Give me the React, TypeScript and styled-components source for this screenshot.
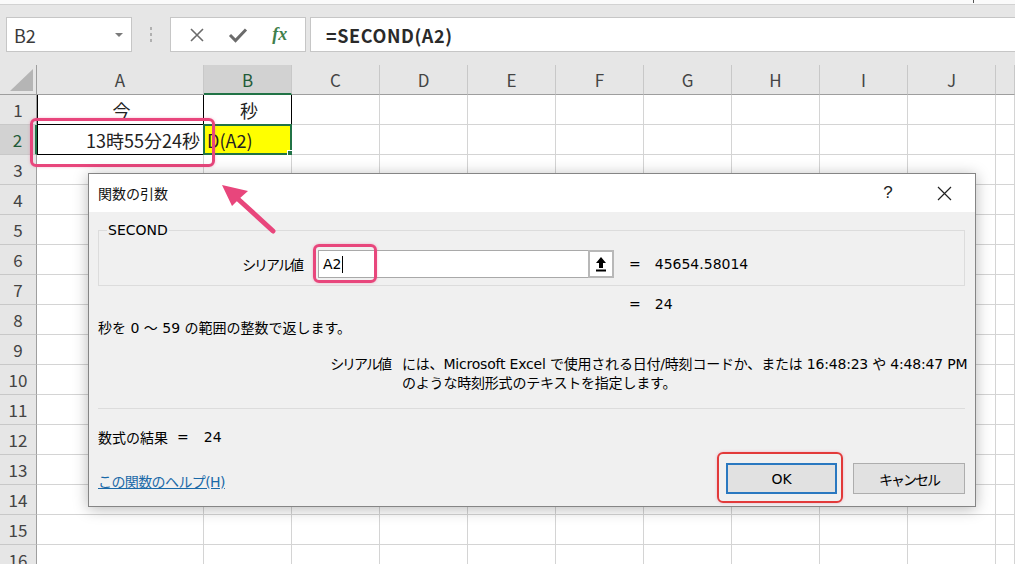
import React from 'react';
import styled, { createGlobalStyle } from 'styled-components';

const GlobalStyle = createGlobalStyle`
  html, body { margin: 0; padding: 0; background: #fff; }
  body { font-family: "Noto Sans CJK JP", "Noto Sans", sans-serif; overflow: hidden; }
  * { box-sizing: border-box; }
`;

const Page = styled.div`
  position: relative;
  width: 1015px;
  height: 564px;
  overflow: hidden;
  background: #fff;
`;

const TopStrip = styled.div`
  height: 5px;
  background: #fafafa;
  border-bottom: 1px solid #d2d2d2;
  display: flex;
  padding-left: 973px;
`;

const StripMark = styled.div`
  width: 1px;
  height: 3px;
  background: #555;
`;

const Toolbar = styled.div`
  display: flex;
  align-items: stretch;
  height: 60px;
  padding: 12px 0 13px 6px;
  background: #e6e6e6;
`;

const NameBox = styled.div`
  width: 126px;
  background: #fff;
  border: 1px solid #c6c6c6;
  display: flex;
  align-items: center;
  justify-content: space-between;
  padding: 0 8px 0 7px;
  font-size: 18px;
  color: #3a3a3a;
`;

const DropTri = styled.span`
  width: 0;
  height: 0;
  border-left: 4px solid transparent;
  border-right: 4px solid transparent;
  border-top: 4px solid #7a7a7a;
`;

const Grip = styled.div`
  width: 38px;
  display: flex;
  flex-direction: column;
  align-items: center;
  justify-content: center;
  gap: 3px;
`;

const GripDot = styled.span`
  width: 2px;
  height: 3px;
  background: #b0b0b0;
`;

const FxBox = styled.div`
  width: 136px;
  background: #fff;
  border: 1px solid #c6c6c6;
  display: flex;
  align-items: center;
  justify-content: space-around;
  padding: 0 6px;
`;

const FxText = styled.span`
  font-family: "Liberation Serif", serif;
  font-style: italic;
  font-weight: bold;
  font-size: 18px;
  color: #3f7f4c;
`;

const FormulaInput = styled.div`
  flex: 1;
  margin-left: 4px;
  margin-right: -2px;
  background: #fff;
  border: 1px solid #c6c6c6;
  display: flex;
  align-items: center;
  padding-left: 15px;
  font-size: 18px;
  font-weight: 600;
  color: #2a2a2a;
  letter-spacing: 0.6px;
`;

const Sheet = styled.div`
  display: grid;
  grid-template-columns: 37px 167px repeat(9, 88px) 1fr;
  grid-auto-rows: 30px;
  background: #fff;
`;

const Corner = styled.div`
  background: #e6e6e6;
  border-right: 1px solid #9e9e9e;
  border-bottom: 1px solid #9e9e9e;
  display: flex;
  align-items: flex-end;
  justify-content: flex-end;
  padding: 0 3px 3px 0;
`;

const CornerTri = styled.div`
  width: 0;
  height: 0;
  border-left: 23px solid transparent;
  border-bottom: 22px solid #b5b5b5;
`;

const ColHeader = styled.div<{ $selected?: boolean }>`
  background: ${p => (p.$selected ? '#d2d2d2' : '#e6e6e6')};
  border-right: 1px solid #c8c8c8;
  border-bottom: ${p => (p.$selected ? '2px solid #217346' : '1px solid #9e9e9e')};
  display: flex;
  align-items: center;
  justify-content: center;
  font-size: 17px;
  color: ${p => (p.$selected ? '#1f5b38' : '#444')};
  padding-top: ${p => (p.$selected ? '1px' : '0')};
`;

const RowHeader = styled.div<{ $selected?: boolean }>`
  background: ${p => (p.$selected ? '#d2d2d2' : '#e6e6e6')};
  border-right: ${p => (p.$selected ? '2px solid #217346' : '1px solid #9e9e9e')};
  border-bottom: 1px solid #c8c8c8;
  display: flex;
  align-items: center;
  justify-content: center;
  font-size: 17px;
  color: ${p => (p.$selected ? '#1f5b38' : '#444')};
`;

const Cell = styled.div<{
  $align?: 'left' | 'center' | 'right';
  $boxed?: boolean;
  $leftEdge?: boolean;
  $fill?: string;
  $active?: boolean;
}>`
  position: relative;
  background: ${p => p.$fill || '#fff'};
  border-right: 1px solid ${p => (p.$boxed ? '#000' : '#d4d4d4')};
  border-bottom: 1px solid ${p => (p.$boxed ? '#000' : '#d4d4d4')};
  box-shadow: ${p => (p.$leftEdge ? 'inset 1px 0 0 #000' : 'none')};
  display: flex;
  align-items: center;
  justify-content: ${p =>
    p.$align === 'right' ? 'flex-end' : p.$align === 'center' ? 'center' : 'flex-start'};
  padding: ${p => (p.$align === 'right' ? '0 3px 0 0' : '0 0 0 3px')};
  font-size: 18px;
  color: #222;
  white-space: nowrap;
  overflow: visible;

  ${p =>
    p.$active &&
    `
    &::before {
      content: '';
      position: absolute;
      left: -1px;
      top: -1px;
      right: -1px;
      bottom: -1px;
      border: 2px solid #217346;
    }
    &::after {
      content: '';
      position: absolute;
      right: -4px;
      bottom: -4px;
      width: 6px;
      height: 6px;
      background: #217346;
      border: 1px solid #fff;
    }
  `}
`;

const Highlight = styled.div<{ $color: string; $w: number }>`
  position: absolute;
  border: ${p => p.$w}px solid ${p => p.$color};
  border-radius: 6px;
  box-shadow: 0 0 3px rgba(232, 70, 124, 0.35);
  pointer-events: none;
`;

const ArrowSvg = styled.svg`
  position: absolute;
  left: 0;
  top: 0;
  pointer-events: none;
`;

const Dialog = styled.div`
  position: absolute;
  left: 88px;
  top: 173px;
  width: 888px;
  height: 334px;
  border: 1px solid #858585;
  box-shadow: 0 2px 14px rgba(0, 0, 0, 0.28);
  display: flex;
  flex-direction: column;
  font-family: "DejaVu Sans", "Noto Sans CJK JP", sans-serif;
  font-size: 14px;
  color: #000;
`;

const Kana = styled.span`
  letter-spacing: -2px;
`;

const TitleBar = styled.div`
  height: 38px;
  background: #fff;
  display: flex;
  align-items: center;
  padding: 0 8px 0 9px;
`;

const Title = styled.div`
  flex: 1;
  font-size: 14px;
  color: #111;
`;

const TitleButton = styled.div`
  width: 46px;
  height: 38px;
  display: flex;
  align-items: center;
  justify-content: center;
  font-family: "Liberation Sans", sans-serif;
  font-size: 17px;
  color: #222;
  margin-left: 10px;
`;

const Body = styled.div`
  flex: 1;
  background: #f0f0f0;
  padding: 18px 10px 11px 9px;
  display: flex;
  flex-direction: column;
`;

const GroupBox = styled.div`
  position: relative;
  height: 56px;
  border: 1px solid #dcdcdc;
  padding-top: 19px;
`;

const GroupLabel = styled.div`
  position: absolute;
  left: 8px;
  top: -10px;
  padding: 0 1px;
  background: #f0f0f0;
  font-size: 14px;
  line-height: 18px;
`;

const ArgRow = styled.div`
  display: flex;
  align-items: center;
  height: 28px;
`;

const ArgLabel = styled.div`
  width: 205px;
  text-align: right;
`;

const ArgInput = styled.div`
  margin-left: 14px;
  width: 270px;
  height: 28px;
  background: #fff;
  border: 1px solid #a9a9a9;
  border-right: none;
  display: flex;
  align-items: center;
  padding-left: 4px;
  font-size: 14px;
`;

const Caret = styled.span`
  width: 1px;
  height: 17px;
  background: #000;
  margin-left: 1px;
`;

const RefButton = styled.div`
  width: 26px;
  height: 28px;
  border: 2px solid #b8b8b8;
  background: #fff;
  display: flex;
  align-items: center;
  justify-content: center;
`;

const EqValue = styled.div<{ $indent: number }>`
  display: flex;
  align-items: center;
  margin-left: ${p => p.$indent}px;
  gap: 14px;
`;

const ResultLine = styled.div`
  height: 20px;
  margin-top: 8px;
  display: flex;
  align-items: center;
`;

const Summary = styled.div`
  height: 20px;
  margin-top: 3px;
  display: flex;
  align-items: center;
  white-space: pre;
`;

const ParamDesc = styled.div`
  margin-top: 18px;
  display: grid;
  grid-template-columns: 294px 1fr;
  column-gap: 10px;
  line-height: 19px;
`;

const ParamName = styled.div`
  text-align: right;
`;

const ParamText = styled.div`
  white-space: pre;
  letter-spacing: -0.2px;
`;

const Separator = styled.div`
  margin-top: 15px;
  height: 1px;
  background: #dcdcdc;
`;

const FormulaResult = styled.div`
  margin-top: 18px;
  height: 20px;
  display: flex;
  align-items: center;
`;

const ResultEq = styled.span`
  margin-left: 9px;
`;

const ResultNum = styled.span`
  margin-left: 15px;
`;

const Footer = styled.div`
  margin-top: 16px;
  display: flex;
  align-items: center;
`;

const HelpLink = styled.a`
  flex: 1;
  color: #1a69a8;
  text-decoration: underline;
  padding-top: 5px;
  font-size: 14px;
`;

const HelpText = styled.span`
  letter-spacing: -0.6px;
`;

const Button = styled.div<{ $default?: boolean }>`
  width: ${p => (p.$default ? '111px' : '112px')};
  height: 31px;
  margin-left: 16px;
  background: #e1e1e1;
  border: ${p => (p.$default ? '2px solid #2a78c0' : '1px solid #adadad')};
  display: flex;
  align-items: center;
  justify-content: center;
  font-size: 14px;
`;

const COLS = ['A', 'B', 'C', 'D', 'E', 'F', 'G', 'H', 'I', 'J', ''];
const ROWS = Array.from({ length: 16 }, (_, i) => i + 1);

type CellDef = {
  text?: string;
  align?: 'left' | 'center' | 'right';
  boxed?: boolean;
  fill?: string;
  active?: boolean;
};

const DATA: Record<string, CellDef> = {
  A1: { text: '今', align: 'center', boxed: true },
  B1: { text: '秒', align: 'center', boxed: true },
  A2: { text: '13時55分24秒', align: 'right', boxed: true },
  B2: { text: 'D(A2)', align: 'left', boxed: true, fill: '#ffff00', active: true },
};

export default function App() {
  return (
    <Page>
      <GlobalStyle />
      <TopStrip>
        <StripMark />
      </TopStrip>
      <Toolbar>
        <NameBox>
          <span>B2</span>
          <DropTri />
        </NameBox>
        <Grip>
          <GripDot />
          <GripDot />
          <GripDot />
        </Grip>
        <FxBox>
          <svg width="16" height="16" viewBox="0 0 16 16">
            <path d="M2 2 L14 14 M14 2 L2 14" stroke="#6b6b6b" strokeWidth="1.6" fill="none" />
          </svg>
          <svg width="20" height="16" viewBox="0 0 20 16">
            <path d="M2 8 L7.5 13.5 L18 2.5" stroke="#6b6b6b" strokeWidth="3" fill="none" />
          </svg>
          <FxText>fx</FxText>
        </FxBox>
        <FormulaInput>=SECOND(A2)</FormulaInput>
      </Toolbar>

      <Sheet>
        <Corner>
          <CornerTri />
        </Corner>
        {COLS.map(c => (
          <ColHeader key={c || 'K'} $selected={c === 'B'}>
            {c}
          </ColHeader>
        ))}
        {ROWS.map(r => (
          <React.Fragment key={r}>
            <RowHeader $selected={r === 2}>{r}</RowHeader>
            {COLS.map((c, ci) => {
              const d = DATA[`${c}${r}`];
              return (
                <Cell
                  key={ci}
                  $align={d?.align}
                  $boxed={d?.boxed}
                  $leftEdge={!!d?.boxed && c === 'A'}
                  $fill={d?.fill}
                  $active={d?.active}
                >
                  {d?.text}
                </Cell>
              );
            })}
          </React.Fragment>
        ))}
      </Sheet>

      <Highlight $color="#e8467c" $w={3} style={{ left: 30, top: 118, width: 185, height: 49 }} />

      <Dialog>
        <TitleBar>
          <Title>関数の引数</Title>
          <TitleButton>?</TitleButton>
          <TitleButton>
            <svg width="15" height="15" viewBox="0 0 15 15">
              <path d="M1 1 L14 14 M14 1 L1 14" stroke="#222" strokeWidth="1.2" fill="none" />
            </svg>
          </TitleButton>
        </TitleBar>
        <Body>
          <GroupBox>
            <GroupLabel>SECOND</GroupLabel>
            <ArgRow>
              <ArgLabel>
                <Kana>シリアル</Kana>値
              </ArgLabel>
              <ArgInput>
                A2
                <Caret />
              </ArgInput>
              <RefButton>
                <svg width="12" height="16" viewBox="0 0 12 16">
                  <path d="M6 1 L11 7 L8 7 L8 12 L4 12 L4 7 L1 7 Z" fill="#000" />
                  <rect x="1" y="13.5" width="10" height="2" fill="#000" />
                </svg>
              </RefButton>
              <EqValue $indent={15}>
                <span>=</span>
                <span>45654.58014</span>
              </EqValue>
            </ArgRow>
          </GroupBox>
          <ResultLine>
            <EqValue $indent={531}>
              <span>=</span>
              <span>24</span>
            </EqValue>
          </ResultLine>
          <Summary>秒を 0 ～ 59 の範囲の整数で返します。</Summary>
          <ParamDesc>
            <ParamName>
              <Kana>シリアル</Kana>値
            </ParamName>
            <ParamText>
              {'には、Microsoft Excel で使用される日付/時刻コードか、または 16:48:23 や 4:48:47 PM\nのような時刻形式のテキストを指定します。'}
            </ParamText>
          </ParamDesc>
          <Separator />
          <FormulaResult>
            <span>数式の結果</span>
            <ResultEq>=</ResultEq>
            <ResultNum>24</ResultNum>
          </FormulaResult>
          <Footer>
            <HelpLink>
              <HelpText>この関数のヘルプ(H)</HelpText>
            </HelpLink>
            <Button $default>OK</Button>
            <Button>
              <Kana>キャンセル</Kana>
            </Button>
          </Footer>
        </Body>
      </Dialog>

      <Highlight $color="#e8467c" $w={3} style={{ left: 313, top: 244, width: 64, height: 39 }} />
      <Highlight $color="#e23a3a" $w={2} style={{ left: 717, top: 452, width: 126, height: 51 }} />

      <ArrowSvg width="1015" height="564" viewBox="0 0 1015 564">
        <path d="M238 199 L273 231" stroke="#e8467c" strokeWidth="5" strokeLinecap="round" />
        <polygon points="222,185 248,191 239,199 232,206" fill="#e8467c" />
      </ArrowSvg>
    </Page>
  );
}
